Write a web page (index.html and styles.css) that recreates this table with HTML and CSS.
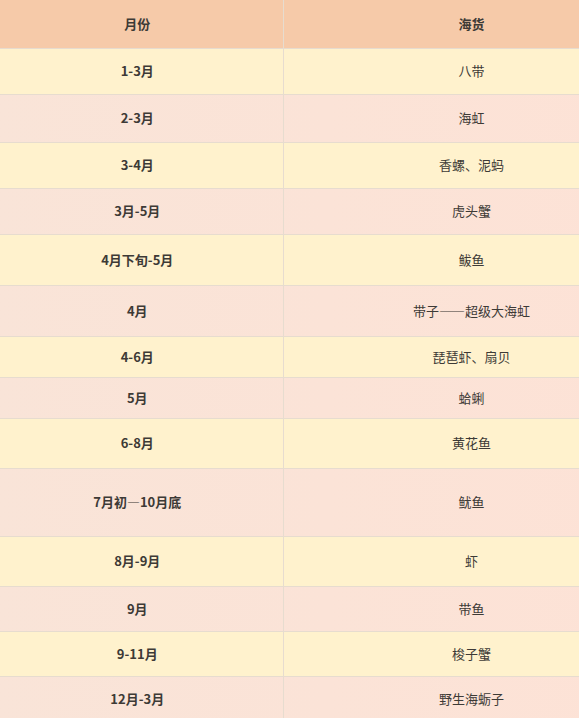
FILE: index.html
```html
<!DOCTYPE html>
<html lang="zh-CN">
<head>
<meta charset="utf-8">
<title>海货月份表</title>
<link rel="stylesheet" href="styles.css">
</head>
<body>
<div class="frame">
<table class="seafood">
  <colgroup><col class="col-month"><col class="col-goods"></colgroup>
  <thead>
    <tr class="h48"><th>月份</th><th>海货</th></tr>
  </thead>
  <tbody>
    <tr class="yel h46"><td class="m">1-3月</td><td>八带</td></tr>
    <tr class="pink h48"><td class="m">2-3月</td><td>海虹</td></tr>
    <tr class="yel h46"><td class="m">3-4月</td><td>香螺、泥蚂</td></tr>
    <tr class="pink h46"><td class="m">3月-5月</td><td>虎头蟹</td></tr>
    <tr class="yel h51"><td class="m">4月下旬-5月</td><td>鲅鱼</td></tr>
    <tr class="pink h51"><td class="m">4月</td><td>带子——超级大海虹</td></tr>
    <tr class="yel h41"><td class="m">4-6月</td><td>琵琶虾、扇贝</td></tr>
    <tr class="pink h41"><td class="m">5月</td><td>蛤蜊</td></tr>
    <tr class="yel h50"><td class="m">6-8月</td><td>黄花鱼</td></tr>
    <tr class="pink h68"><td class="m">7月初—10月底</td><td>鱿鱼</td></tr>
    <tr class="yel h50"><td class="m">8月-9月</td><td>虾</td></tr>
    <tr class="pink h45"><td class="m">9月</td><td>带鱼</td></tr>
    <tr class="yel h45"><td class="m">9-11月</td><td>梭子蟹</td></tr>
    <tr class="pink h45"><td class="m">12月-3月</td><td>野生海蛎子</td></tr>
  </tbody>
</table>
</div>
</body>
</html>
```

FILE: styles.css
```css
html, body {
  margin: 0;
  padding: 0;
  background: #fff;
}
.frame {
  width: 579px;
  height: 718px;
  overflow: hidden;
}
.seafood {
  margin-left: -8px;
  width: 668px;
  border-collapse: collapse;
  table-layout: fixed;
  font-family: "Noto Sans CJK SC", "Noto Sans", sans-serif;
  font-size: 13px;
  color: #3d3a36;
}
.col-month { width: 291px; }
.col-goods { width: 377px; }
.seafood th, .seafood td {
  padding: 0;
  text-align: center;
  vertical-align: middle;
  border: 1px solid #e7dccf;
  line-height: 18px;
}
.seafood thead tr {
  background: #f6caa9;
}
.seafood th {
  font-weight: bold;
  border-top: none;
}
.seafood td.m {
  font-weight: bold;
}
.seafood td:first-child, .seafood th:first-child { border-left: none; }
.yel { background: #fff2cd; }
.pink { background: linear-gradient(90deg, #f9e4d8, #fde2d6); }
.h41 { height: 41px; }
.h45 { height: 45px; }
.h46 { height: 46px; }
.h48 { height: 48px; }
.h50 { height: 50px; }
.h51 { height: 51px; }
.h68 { height: 68px; }
```
